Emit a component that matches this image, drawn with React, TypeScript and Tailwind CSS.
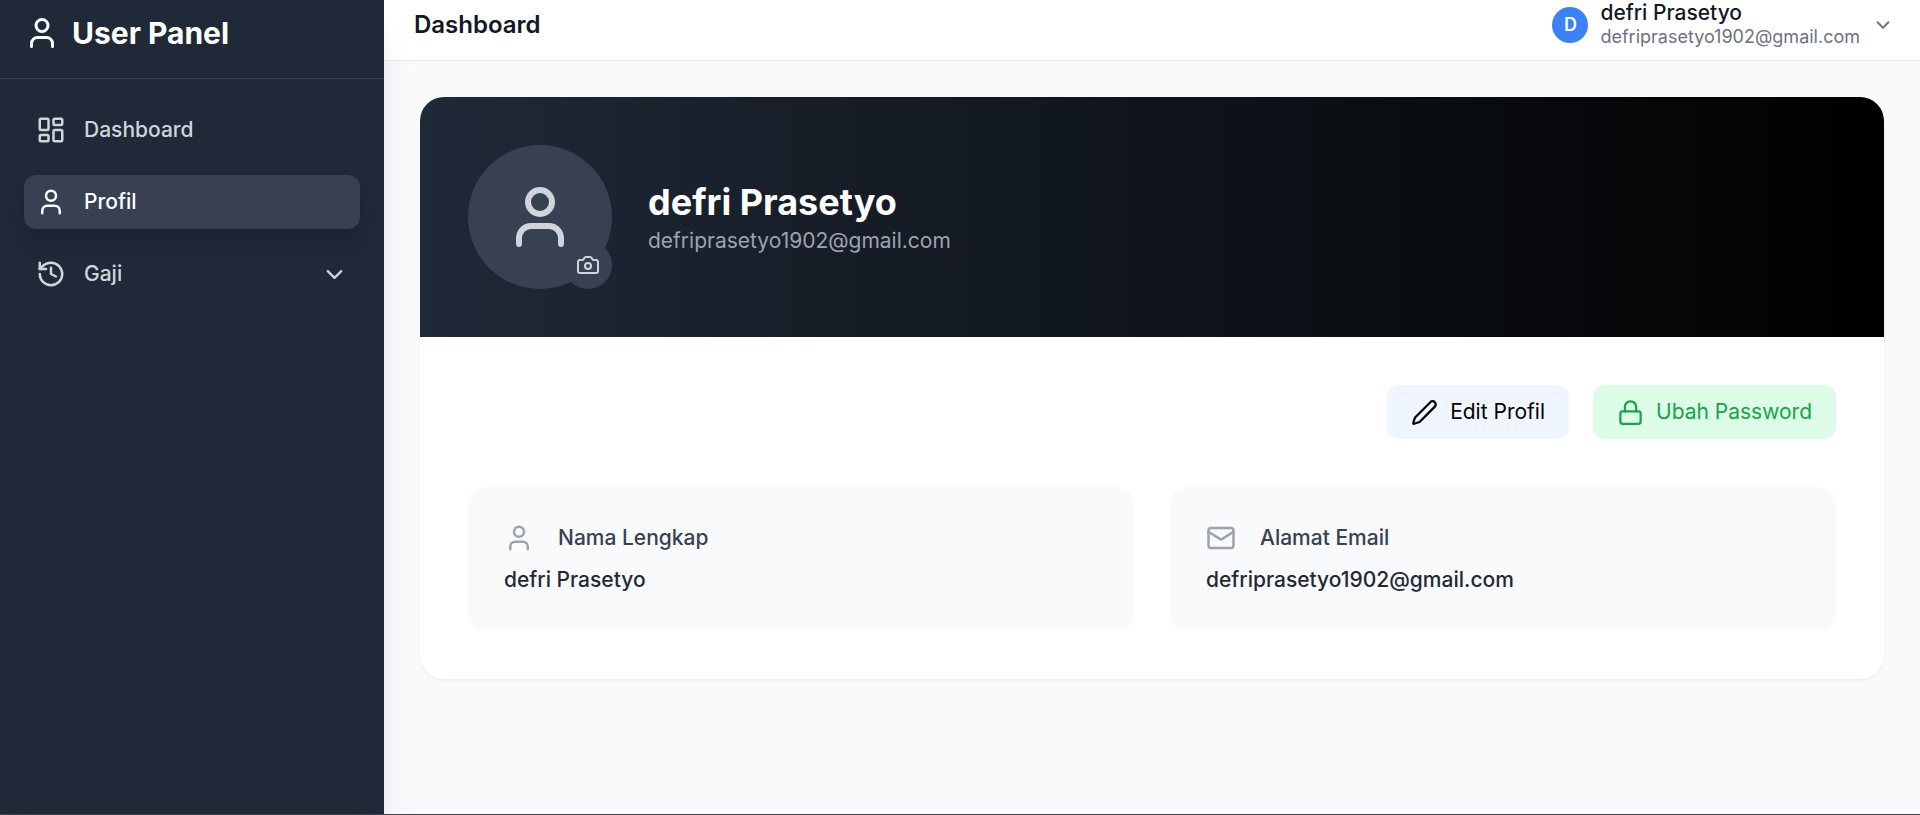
import React from "react";
import { Camera, ChevronDown, History, LayoutDashboard, Lock, Mail, Pen, User } from "lucide-react";

const profile = {
  name: "defri Prasetyo",
  email: "defriprasetyo1902@gmail.com",
};

function Sidebar() {
  return (
    <aside className="relative z-10 flex w-96 shrink-0 flex-col bg-[#1f2937] shadow-[0_30px_38px_-8px_rgb(0_0_0/0.1),0_12px_15px_-9px_rgb(0_0_0/0.1)]">
      <div className="flex items-center gap-3 border-b border-[#374151] px-6 pt-3 pb-6 text-white">
        <User className="size-9" />
        <span className="text-[30px] leading-[42px] font-bold">User Panel</span>
      </div>
      <nav className="flex flex-col gap-[18px] p-6 text-[21px] leading-[30px] font-medium text-[#d1d5db]">
        <a href="#dashboard" className="flex items-center gap-[18px] rounded-xl p-3">
          <LayoutDashboard className="size-[30px]" />
          Dashboard
        </a>
        <a
          href="#profil"
          aria-current="page"
          className="flex items-center gap-[18px] rounded-xl bg-[#374151] p-3 text-white shadow-[0_15px_22px_-4px_rgb(0_0_0/0.1),0_6px_9px_-6px_rgb(0_0_0/0.1)]"
        >
          <User className="size-[30px]" />
          Profil
        </a>
        <button type="button" className="flex items-center gap-[18px] rounded-xl p-3 text-left">
          <History className="size-[30px]" />
          <span className="grow">Gaji</span>
          <ChevronDown className="size-[27px]" />
        </button>
      </nav>
    </aside>
  );
}

function Header() {
  return (
    <header className="flex items-center justify-between border-b border-[#e5e7eb] bg-white pr-[26px] pb-[11px] pl-[30px]">
      <h1 className="text-2xl font-semibold text-[#111827]">Dashboard</h1>
      <button type="button" className="flex items-center gap-3 text-left">
        <span className="flex size-9 items-center justify-center rounded-full bg-[#3b82f6] text-lg font-semibold text-white">
          D
        </span>
        <span className="flex flex-col pt-px">
          <span className="text-[21px] leading-6 font-medium text-[#111827]">{profile.name}</span>
          <span className="text-lg leading-6 text-[#6b7280]">{profile.email}</span>
        </span>
        <ChevronDown className="size-[22px] text-[#6b7280]" />
      </button>
    </header>
  );
}

function InfoCard({ icon, label, value }: { icon: React.ReactNode; label: string; value: string }) {
  return (
    <div className="rounded-[18px] bg-[#f9fafb] p-9 text-[21px] leading-[30px] font-medium">
      <dt className="flex items-center gap-6 text-[#374151]">
        {icon}
        {label}
      </dt>
      <dd className="mt-3 text-[#1f2937]">{value}</dd>
    </div>
  );
}

export default function App() {
  return (
    <div className="flex min-h-screen border-b border-[#45464f] bg-[#f9fafb] font-['Inter',sans-serif]">
      <Sidebar />
      <div className="flex min-w-0 grow flex-col">
        <Header />
        <main className="p-9">
          <section className="overflow-hidden rounded-3xl bg-white shadow-[0_2px_3px_rgb(0_0_0/0.05)]">
            <div className="flex items-center gap-9 bg-linear-to-r/srgb from-[#1f2937] to-black p-12">
              <div className="relative flex size-36 items-center justify-center rounded-full bg-[#374151] text-[#d1d5db]">
                <User className="size-[72px]" />
                <button
                  type="button"
                  aria-label="Ubah foto"
                  className="absolute right-0 bottom-0 flex size-12 items-center justify-center rounded-full bg-[#374151]"
                >
                  <Camera className="size-6" />
                </button>
              </div>
              <div>
                <h2 className="text-4xl leading-[48px] font-bold text-white">{profile.name}</h2>
                <p className="text-[21px] leading-[30px] text-[#9ca3af]">{profile.email}</p>
              </div>
            </div>
            <div className="p-12">
              <div className="flex justify-end gap-6 text-[21px] leading-[30px]">
                <button type="button" className="flex items-center gap-3 rounded-xl bg-[#eff6ff] px-6 py-3 text-black">
                  <Pen className="size-[27px]" />
                  Edit Profil
                </button>
                <button type="button" className="flex items-center gap-3 rounded-xl bg-[#dcfce7] px-6 py-3 text-[#16a34a]">
                  <Lock className="size-[27px]" />
                  Ubah Password
                </button>
              </div>
              <dl className="mt-12 grid grid-cols-2 gap-9">
                <InfoCard
                  icon={<User className="size-[30px] text-[#9ca3af]" />}
                  label="Nama Lengkap"
                  value={profile.name}
                />
                <InfoCard
                  icon={<Mail className="size-[30px] text-[#9ca3af]" />}
                  label="Alamat Email"
                  value={profile.email}
                />
              </dl>
            </div>
          </section>
        </main>
      </div>
    </div>
  );
}
